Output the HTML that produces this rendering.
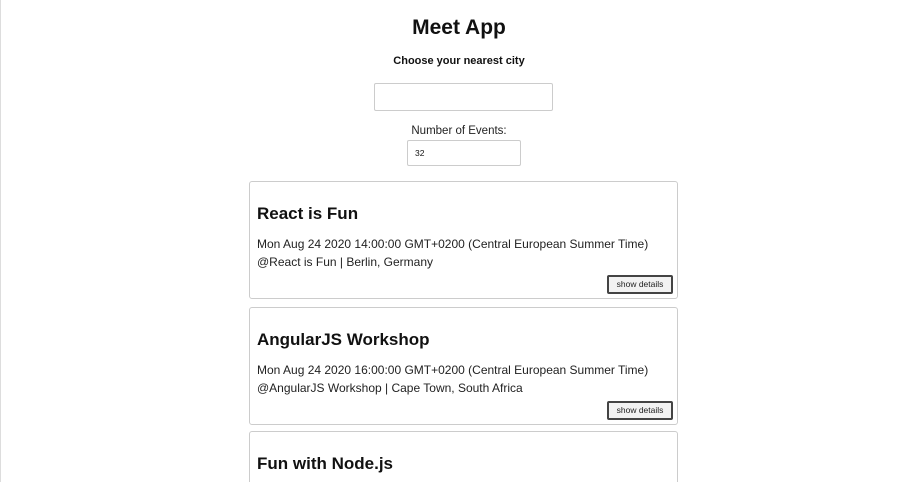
<!DOCTYPE html>
<html style="overflow:hidden;height:482px"><head><style>
body{margin:0;width:918px;height:482px;overflow:hidden;background:#fff;font-family:"Liberation Sans",sans-serif;color:#111;position:relative}
.a{position:absolute}
.c{position:absolute;left:249px;width:427px;border:1px solid #ccc;border-radius:3px;background:#fff}
.c h2{position:absolute;left:7px;top:22px;margin:0;font-size:17px;font-weight:bold}
.c .d{position:absolute;left:7px;top:55px;font-size:12px;color:#222}
.c .l{position:absolute;left:7px;top:73px;font-size:12px;color:#222}
.c .b{position:absolute;left:357px;top:93px;width:62px;height:15px;border:2px solid #444;border-radius:2px;background:#f2f2f2;font-size:8.5px;text-align:center;line-height:15px;color:#222}
</style></head><body>
<div class="a" style="left:0;top:0;width:1px;height:482px;background:#ddd"></div>
<div class="a" style="left:0;width:918px;top:16px;text-align:center;font-size:21px;font-weight:bold">Meet App</div>
<div class="a" style="left:0;width:918px;top:55px;text-align:center;font-size:11px;font-weight:bold">Choose your nearest city</div>
<div class="a" style="left:374px;top:83px;width:177px;height:26px;border:1px solid #ccc;border-radius:2px"></div>
<div class="a" style="left:0;width:918px;top:125px;text-align:center;font-size:11.5px;color:#222">Number of Events:</div>
<div class="a" style="left:407px;top:140px;width:112px;height:24px;border:1px solid #ccc;border-radius:2px;font-size:8.5px;line-height:24px;text-indent:7px">32</div>
<div class="c" style="top:181px;height:116px"><h2>React is Fun</h2><div class="d">Mon Aug 24 2020 14:00:00 GMT+0200 (Central European Summer Time)</div><div class="l">@React is Fun | Berlin, Germany</div><div class="b">show details</div></div>
<div class="c" style="top:307px;height:116px"><h2>AngularJS Workshop</h2><div class="d">Mon Aug 24 2020 16:00:00 GMT+0200 (Central European Summer Time)</div><div class="l">@AngularJS Workshop | Cape Town, South Africa</div><div class="b">show details</div></div>
<div class="c" style="top:431px;height:52px"><h2>Fun with Node.js</h2></div>
</body></html>
